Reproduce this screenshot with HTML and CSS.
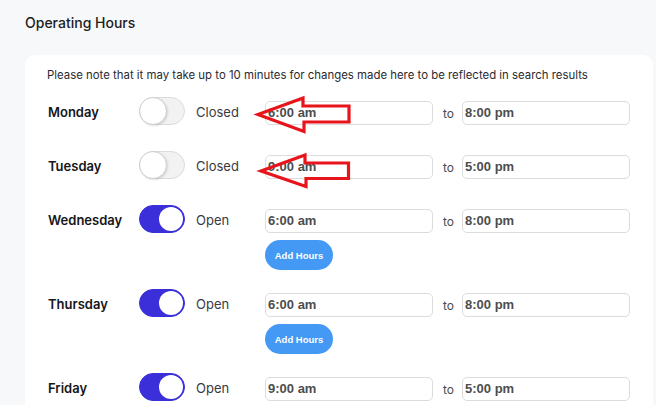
FILE: index.html
```html
<!DOCTYPE html>
<html>
<head>
<meta charset="utf-8">
<link rel="stylesheet" href="styles.css">
</head>
<body>
<h2 class="title">Operating Hours</h2>
<div class="card">
  <p class="note">Please note that it may take up to 10 minutes for changes made here to be reflected in search results</p>
  <div class="rows">
    <div class="row">
      <div class="day">Monday</div>
      <span class="toggle"><span class="knob"></span></span>
      <div class="status">Closed</div>
      <div class="times">
        <div class="range"><div class="input">6:00 am</div><span class="to">to</span><div class="input">8:00 pm</div></div>
      </div>
    </div>
    <div class="row">
      <div class="day">Tuesday</div>
      <span class="toggle"><span class="knob"></span></span>
      <div class="status">Closed</div>
      <div class="times">
        <div class="range"><div class="input">9:00 am</div><span class="to">to</span><div class="input">5:00 pm</div></div>
      </div>
    </div>
    <div class="row">
      <div class="day">Wednesday</div>
      <span class="toggle on"><span class="knob"></span></span>
      <div class="status">Open</div>
      <div class="times">
        <div class="range"><div class="input">6:00 am</div><span class="to">to</span><div class="input">8:00 pm</div></div>
        <button class="add">Add Hours</button>
      </div>
    </div>
    <div class="row">
      <div class="day">Thursday</div>
      <span class="toggle on"><span class="knob"></span></span>
      <div class="status">Open</div>
      <div class="times">
        <div class="range"><div class="input">6:00 am</div><span class="to">to</span><div class="input">8:00 pm</div></div>
        <button class="add">Add Hours</button>
      </div>
    </div>
    <div class="row">
      <div class="day">Friday</div>
      <span class="toggle on"><span class="knob"></span></span>
      <div class="status">Open</div>
      <div class="times">
        <div class="range"><div class="input">9:00 am</div><span class="to">to</span><div class="input">5:00 pm</div></div>
      </div>
    </div>
  </div>
</div>
<svg class="arrows" width="656" height="405" viewBox="0 0 656 405">
  <polygon points="258,114.5 303,98 303,106 349,106 349,122 304,122 304,131.5" fill="none" stroke="#e8141c" stroke-width="3.2" stroke-linejoin="miter"/>
  <polygon points="261,171 305,155 305,163 348.5,163 348.5,178.5 306,178.5 306,186.5" fill="none" stroke="#e8141c" stroke-width="3.2" stroke-linejoin="miter"/>
</svg>
</body>
</html>
```
FILE: styles.css
```css
html, body {
  margin: 0;
  padding: 0;
}
body {
  background: #f7f8fa;
  font-family: Inter, "Liberation Sans", sans-serif;
  color: #1d1d22;
  width: 656px;
  height: 405px;
  overflow: hidden;
  position: relative;
  padding: 15px 0 0 25px;
  box-sizing: border-box;
}
.title {
  margin: 0;
  font-size: 14px;
  line-height: 16px;
  font-weight: 500;
  color: #1d1d22;
}
.card {
  margin-top: 24px;
  width: 628px;
  box-sizing: border-box;
  background: #fff;
  border-radius: 10px;
  padding: 12px 22px 0 22px;
  height: 366px;
}
.note {
  margin: 0;
  font-size: 11.4px;
  line-height: 16px;
  color: #2a2a30;
  white-space: nowrap;
}
.rows {
  margin-top: 14px;
  display: flex;
  flex-direction: column;
  gap: 18px;
}
.row {
  display: flex;
  align-items: flex-start;
  min-height: 36px;
}
.day {
  width: 92px;
  padding-left: 1px;
  box-sizing: border-box;
  font-size: 13px;
  font-weight: 600;
  line-height: 28px;
  padding-top: 1px;
  color: #16161a;
}
.toggle {
  position: relative;
  width: 46px;
  height: 28px;
  box-sizing: border-box;
  border-radius: 14px;
  background: #f2f2f2;
  border: 1px solid #dcdcdc;
  flex: none;
}
.toggle .knob {
  position: absolute;
  left: -1px;
  top: -1px;
  width: 28px;
  height: 28px;
  box-sizing: border-box;
  border-radius: 50%;
  background: #fff;
  border: 1px solid #cfcfcf;
  box-shadow: 1px 1px 2px rgba(0,0,0,0.12);
}
.toggle.on {
  background: #3a2fd8;
  border-color: #3a2fd8;
}
.toggle.on .knob {
  left: auto;
  right: 1px;
  top: 1px;
  width: 24px;
  height: 24px;
  border: none;
  box-shadow: none;
}
.status {
  width: 69px;
  margin-left: 11px;
  font-size: 13px;
  line-height: 28px;
  padding-top: 1px;
  color: #3a3a40;
}
.times {
  padding-top: 4px;
  display: flex;
  flex-direction: column;
  align-items: flex-start;
}
.range {
  display: flex;
  align-items: center;
}
.input {
  width: 168px;
  height: 24px;
  box-sizing: border-box;
  border: 1px solid #dcdcdc;
  border-radius: 5px;
  background: #fff;
  padding-left: 2px;
  font-family: "Liberation Sans", Arial, sans-serif;
  font-weight: bold;
  font-size: 13px;
  line-height: 22px;
  color: #4d4d4d;
}
.to {
  width: 29px;
  box-sizing: border-box;
  padding-left: 10px;
  font-size: 12px;
  color: #4a4a50;
}
.add {
  margin-top: 7px;
  margin-bottom: 1px;
  width: 68px;
  height: 30px;
  border: none;
  border-radius: 15px;
  background: #4399f4;
  color: #fff;
  font-family: "Liberation Sans", Arial, sans-serif;
  font-weight: bold;
  font-size: 9.5px;
  padding: 0;
}
.arrows {
  position: absolute;
  left: 0;
  top: 0;
  pointer-events: none;
}
```
